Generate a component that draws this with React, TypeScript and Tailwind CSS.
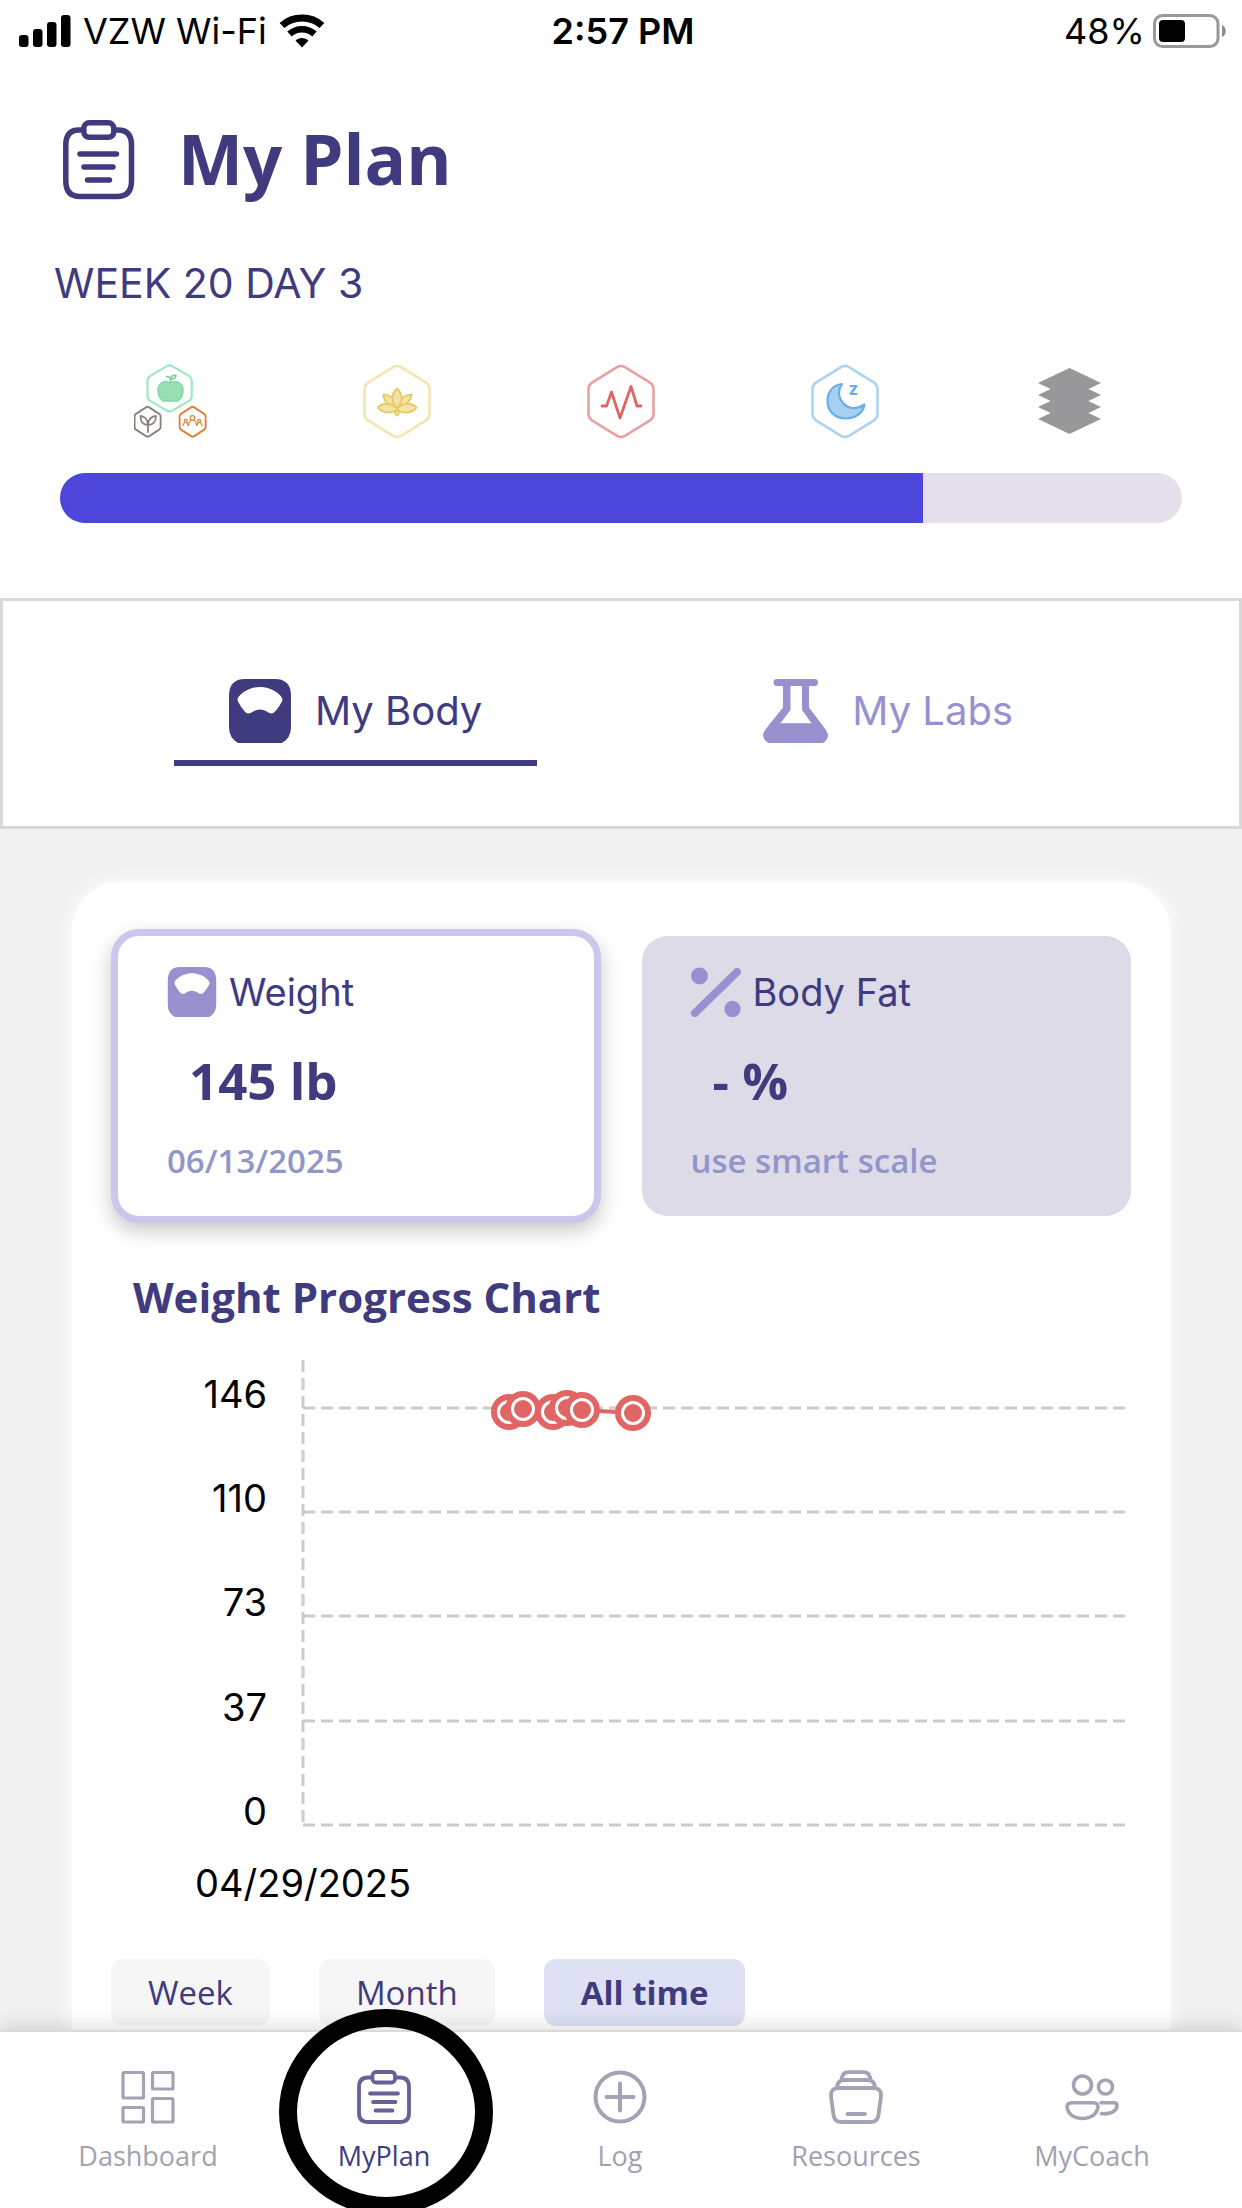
import { useState, type ReactNode } from 'react';
import clsx from 'clsx';

const HEX =
  'M30 3.2Q34 .8 38 3.2L63 18.6Q66.5 21 66.5 25V50Q66.5 54 63 56.4L38 71.8Q34 74.2 30 71.8L5 56.4Q1.5 54 1.5 50V25Q1.5 21 5 18.6Z';

/* ---------- Status bar ---------- */

function StatusBar() {
  return (
    <div className="grid grid-cols-3 items-center h-[60px] pl-[19px] pr-[15px] font-['Inter',sans-serif] text-[36px] leading-[62px] text-black">
      <div className="flex items-center gap-3 whitespace-nowrap">
        <svg width="52" height="34" viewBox="0 0 52 34" aria-hidden="true">
          <rect x="0" y="21" width="9.5" height="12" rx="3" />
          <rect x="14" y="15" width="9.5" height="18" rx="3" />
          <rect x="28" y="8" width="9.5" height="25" rx="3" />
          <rect x="42" y="1" width="9.5" height="32" rx="3" />
        </svg>
        <span>VZW Wi-Fi</span>
        <svg width="46" height="34" viewBox="0 0 46 34" fill="none" stroke="#000" aria-hidden="true">
          <path d="M3 11.5C14 1.5 32 1.5 43 11.5" strokeWidth="7" />
          <path d="M10.500 20C17.500 13.500 28.500 13.500 35.500 20" strokeWidth="6.500" />
          <path d="M23 33.500L16.500 26.500C20 23 26 23 29.500 26.500Z" fill="#000" stroke="none" />
        </svg>
      </div>
      <span className="text-center font-semibold">2:57 PM</span>
      <div className="flex items-center justify-end gap-2">
        <span>48%</span>
        <svg width="74" height="34" viewBox="0 0 74 34" fill="none" aria-hidden="true">
          <rect x="1.500" y="1.500" width="63.500" height="31" rx="8" stroke="#999" strokeWidth="3" />
          <rect x="6" y="6" width="26" height="22" rx="4" fill="#000" />
          <path d="M69 11C74 13 74 21 69 23Z" fill="#8c8c8c" />
        </svg>
      </div>
    </div>
  );
}

/* ---------- Icons ---------- */

function ClipboardIcon() {
  return (
    <svg width="72" height="80" viewBox="0 0 72 80" fill="none" stroke="#403a7f" strokeWidth="5.500" strokeLinecap="round" aria-hidden="true">
      <path d="M19 10H16Q2.800 10 2.800 25V61Q2.800 76.500 17 76.500H54Q68.500 76.500 68.500 61V25Q68.500 10 55 10H52" />
      <rect x="20.800" y="2.800" width="30" height="14.500" rx="5.500" />
      <path d="M17 34H53.500M21 47H50M24.500 60H46.500" />
    </svg>
  );
}

function NutritionIcon() {
  return (
    <svg width="76" height="75" viewBox="0 0 76 75" fill="none" strokeLinecap="round" strokeLinejoin="round" aria-hidden="true">
      <g transform="translate(12.500 0) scale(.68 .65)">
        <path d={HEX} stroke="#a0e6c3" strokeWidth="3.300" />
      </g>
      <path d="M36 19C31 15.500 24 19 24 26C24 31 26.500 35 29 37H44C46.500 35 49 31 49 26C49 19 42 15.500 36 19Z" fill="#97e0b4" stroke="#82d6a4" strokeWidth="1.500" />
      <path d="M36.500 18V14.500M36.500 15C37 11.500 39.500 11 42 11.500C41.500 14.500 39 15.500 36.500 15ZM36.500 14.500C35.500 12.500 34 12.500 32.500 12.500" stroke="#79cf9b" strokeWidth="1.600" />
      <g transform="translate(0 42) scale(.4 .42)">
        <path d={HEX} stroke="#8a8375" strokeWidth="4.600" />
      </g>
      <path d="M14 68V59M14 61C14 55 10 52 6.500 52C6.500 57.500 9 61 14 61ZM14 61C14 55 18 52 22 52C22 57.500 19 61 14 61Z" stroke="#8a8375" strokeWidth="1.800" />
      <g transform="translate(45 42) scale(.4 .42)">
        <path d={HEX} stroke="#dd7f36" strokeWidth="4.600" />
      </g>
      <g stroke="#dd8a4a" strokeWidth="1.300">
        <circle cx="58.500" cy="54" r="2.300" />
        <path d="M54.500 61.500C54.500 58.500 55.500 57 57 56.500M62.500 61.500C62.500 58.500 61.500 57 60 56.500" />
        <circle cx="51.800" cy="57" r="1.500" />
        <circle cx="65.200" cy="57" r="1.500" />
        <path d="M49 61.500C49 60 50 59 51 58.500M53.800 61C53.700 60 53.300 59 52.500 58.500M68 61.500C68 60 67 59 66 58.500M63.200 61C63.300 60 63.700 59 64.500 58.500" />
      </g>
    </svg>
  );
}

function HexIcon({ color, children }: { color: string; children: ReactNode }) {
  return (
    <svg width="68" height="75" viewBox="0 0 68 75" fill="none" strokeLinecap="round" strokeLinejoin="round" aria-hidden="true">
      <path d={HEX} stroke={color} strokeWidth="2.600" />
      {children}
    </svg>
  );
}

function LotusIcon() {
  return (
    <HexIcon color="#f4e6b0">
      <g fill="#f4e3a6" stroke="#e7cb68" strokeWidth="2">
        <path d="M34 44C27 42 20.500 38 20.500 30.500C28 31 33 36 34 44ZM34 44C41 42 48 38 48.500 30.500C41 31 35 36 34 44Z" />
        <path d="M34 44.500C28 38 28 30 34 24.500C40 30 40 38 34 44.500Z" />
        <path d="M34 45C28 38 19 38.500 14.800 43.500C20 50 30 50 34 45ZM34 45C40 38 49 38.500 53.500 43.500C48 50 38 50 34 45Z" />
        <path d="M34 45C31.500 48 31.500 50 34 51.500C36.500 50 36.500 48 34 45Z" />
      </g>
    </HexIcon>
  );
}

function PulseIcon() {
  return (
    <HexIcon color="#eaa0a3">
      <path d="M15 42H19.500L24.500 28L33 54L44 22.500L50 42H54" stroke="#dd6666" strokeWidth="2.800" />
    </HexIcon>
  );
}

function SleepIcon() {
  return (
    <HexIcon color="#acd3f3">
      <path d="M31 20C21 21 16.500 29 16.500 37C16.500 48 25 54.500 35 54.500C44.500 54.500 52 49 53.500 40.500C46 46 37 45 32 39C27 33 27 26 31 20Z" fill="#a6cff2" stroke="#6aaee8" strokeWidth="2.200" />
      <text x="38" y="31" fontSize="18" className="font-['Open_Sans',sans-serif] font-bold" fill="#68aee9">z</text>
    </HexIcon>
  );
}

function StackIcon() {
  return (
    <svg width="63" height="75" viewBox="0 0 63 75" fill="#98989a" aria-hidden="true">
      {[19, 31, 43, 55].map(y => (
        <path key={y} d={`M31.500 ${y - 15}L63 ${y}L31.500 ${y + 15}L0 ${y}Z`} />
      ))}
    </svg>
  );
}

function ScaleIcon({ className }: { className: string }) {
  return (
    <svg viewBox="0 0 62 64" className={className} fill="currentColor" aria-hidden="true">
      <path
        fillRule="evenodd"
        d="M16 0H46Q62 0 62 17V48Q62 59 53 64H9Q0 59 0 48V17Q0 0 16 0ZM19 34.500C16 34.500 8.500 23 8.500 20.500C8.500 17 18 8 31 8S53.500 17 53.500 20.500C53.500 23 46 34.500 43 34.500C39 34.500 37 30.500 31 30.500S23 34.500 19 34.500Z"
      />
    </svg>
  );
}

function FlaskIcon() {
  return (
    <svg width="65" height="64" viewBox="0 0 65 65" preserveAspectRatio="none" fill="currentColor" aria-hidden="true">
      <path
        fillRule="evenodd"
        d="M14 0H51.500Q55 0 55 3.500T51.500 7H46V29L62.500 51Q65 55 65 57Q65 62 60 65H5.500Q0 62 0 57Q0 55 2.500 51L20 29V7H14Q10.500 7 10.500 3.500T14 0ZM27.500 7V31.500L17.500 45H48.500L39 31.500V7Z"
      />
    </svg>
  );
}

function PercentIcon() {
  return (
    <svg width="50" height="50" viewBox="0 0 50 50" fill="#9791d0" aria-hidden="true">
      <circle cx="8.500" cy="9" r="8.500" />
      <circle cx="41.500" cy="42" r="8.200" />
      <path d="M4 46L46 5" stroke="#9791d0" strokeWidth="8" strokeLinecap="round" />
    </svg>
  );
}

/* ---------- Weight chart ---------- */

const gridLines = [
  { label: '146', y: 67 },
  { label: '110', y: 171 },
  { label: '73', y: 275 },
  { label: '37', y: 380 },
  { label: '0', y: 484 },
];

const points = [
  [398, 71],
  [412, 68],
  [442, 71],
  [456, 67],
  [471, 69],
  [522, 72],
];

function WeightChart() {
  return (
    <svg viewBox="0 0 1020 580" className="block w-full h-auto mt-4 font-['Inter',sans-serif]" role="img" aria-label="Weight Progress Chart">
      <g stroke="#cbcbcb" strokeWidth="3" strokeDasharray="12 6">
        <path d="M192 19V482" />
        {gridLines.map(line => (
          <path key={line.label} d={`M192 ${line.y}H1014`} />
        ))}
      </g>
      <g fontSize="38" fill="#000" textAnchor="end">
        {gridLines.map(line => (
          <text key={line.label} x="156" y={line.y}>{line.label}</text>
        ))}
      </g>
      <text x="84" y="556" fontSize="38" fill="#000">04/29/2025</text>
      <polyline points={points.map(p => p.join(',')).join(' ')} fill="none" stroke="#e06666" strokeWidth="4" />
      {points.map(([x, y]) => (
        <g key={x}>
          <circle cx={x} cy={y} r="18" fill="#e06666" />
          <circle cx={x} cy={y} r="10.500" fill="none" stroke="#fff" strokeWidth="3" />
        </g>
      ))}
    </svg>
  );
}

/* ---------- Stat cards ---------- */

type StatProps = {
  icon: ReactNode;
  label: string;
  value: string;
  note: string;
  active?: boolean;
};

function StatCard({ icon, label, value, note, active }: StatProps) {
  return (
    <button
      type="button"
      className={clsx(
        'text-left pl-[49px] pt-[31px] pb-[33px] text-[#403a7f]',
        active
          ? 'rounded-[28px] border-[7px] border-[#cbc7ec] bg-white shadow-[0_8px_20px_rgba(0,0,0,0.22)]'
          : 'rounded-[26px] bg-[#dcdbe7]',
      )}
    >
      <span className="flex items-center gap-3 font-['Inter',sans-serif] text-[38px] leading-[50px]">
        {icon}
        {label}
      </span>
      <span className="block mt-7 pl-[22px] text-[51px] leading-[70px] font-bold">{value}</span>
      <span className="block mt-6 text-[33px] leading-[44px] font-semibold text-[#9097c8]">{note}</span>
    </button>
  );
}

/* ---------- Bottom navigation ---------- */

const navItems = [
  {
    label: 'Dashboard',
    icon: (
      <g strokeWidth="3.200">
        <rect x="2" y="2.500" width="20.500" height="25.500" rx="1" />
        <rect x="31.500" y="2.500" width="20.500" height="16.500" rx="1" />
        <rect x="2" y="37.500" width="20.500" height="14.500" rx="1" />
        <rect x="31.500" y="28.500" width="20.500" height="23.500" rx="1" />
      </g>
    ),
  },
  {
    label: 'MyPlan',
    icon: (
      <g strokeWidth="3.800">
        <path d="M14 7.500H11Q2 7.500 2 17V43Q2 52 11 52H43Q52 52 52 43V17Q52 7.500 43 7.500H39" />
        <rect x="15.500" y="2" width="22.500" height="10.500" rx="3.500" />
        <path d="M13 23.500H41M16 32H38.500M18.500 40.500H35.500" />
      </g>
    ),
  },
  {
    label: 'Log',
    icon: (
      <g strokeWidth="4">
        <circle cx="27" cy="27" r="24.500" />
        <path d="M27 13.500V40.500M13.500 27H40.500" />
      </g>
    ),
  },
  {
    label: 'Resources',
    icon: (
      <g strokeWidth="3.800">
        <path d="M10 18H44Q52.500 18 52 26L49.500 45Q48.500 52 42 52H12Q5.500 52 4.500 45L2 26Q1.500 18 10 18Z" />
        <path d="M8 17Q9 10 15 10H39Q45 10 46 17M12.500 10Q13.500 2.200 19 2.200H35Q40.500 2.200 41.500 10M18.500 44H36" />
      </g>
    ),
  },
  {
    label: 'MyCoach',
    icon: (
      <g strokeWidth="3.600">
        <circle cx="17.500" cy="15" r="9" />
        <circle cx="40.500" cy="17" r="7" />
        <path d="M7 32.800H28Q33 32.800 33 37C32 44 26 48.500 17.500 48.500C9 48.500 3 44 2 37Q2 32.800 7 32.800Z" />
        <path d="M36 32.800H49Q52 32.800 52 36C51.500 41 45 45 36.500 43.500" />
      </g>
    ),
  },
];

function BottomNav() {
  return (
    <nav className="relative shrink-0 grid grid-cols-5 pl-[30px] pr-8 pt-[38px] pb-[34px] bg-white border-t-2 border-[#dadada] shadow-[0_-4px_18px_rgba(0,0,0,0.13)]">
      {navItems.map(item => {
        const isActive = item.label === 'MyPlan';
        return (
          <a
            key={item.label}
            href="#"
            aria-current={isActive ? 'page' : undefined}
            className={clsx('relative flex flex-col items-center gap-[14px]', isActive ? 'text-[#403a7f]' : 'text-[#a1a1b0]')}
          >
            <svg
              width="54"
              height="54"
              viewBox="0 0 54 54"
              fill="none"
              stroke={isActive ? '#67619a' : '#a3a3b3'}
              strokeLinecap="round"
              strokeLinejoin="round"
              aria-hidden="true"
            >
              {item.icon}
            </svg>
            <span className="text-[27px] leading-9">{item.label}</span>
            {isActive && (
              <span className="absolute left-1/2 -top-[61px] -ml-[105px] w-[214px] h-[206px] rounded-[50%] border-[18px] border-black pointer-events-none" />
            )}
          </a>
        );
      })}
    </nav>
  );
}

/* ---------- Page ---------- */

const ranges = ['Week', 'Month', 'All time'];

export default function App() {
  const [tab, setTab] = useState('body');
  const [range, setRange] = useState('All time');
  const progress = (20 / 26) * 100;

  return (
    <div className="flex flex-col h-screen overflow-hidden bg-[#f1f1f1] font-['Open_Sans',sans-serif] text-[#403a7f]">
      <main className="flex-1 min-h-0 overflow-y-auto [scrollbar-width:none]">
        <header className="bg-white pb-[75px]">
          <StatusBar />
          <div className="flex items-center gap-[43px] pt-[58px] pl-[63px]">
            <ClipboardIcon />
            <h1 className="pb-1 text-[69px] leading-[80px] font-bold">My Plan</h1>
          </div>
          <p className="mt-[57px] pl-[54px] font-['Inter',sans-serif] text-[41px] leading-[48px]">WEEK 20 DAY 3</p>

          <div className="mt-[57px] px-[60px]">
            <div className="grid grid-cols-5 justify-items-center">
              <NutritionIcon />
              <LotusIcon />
              <PulseIcon />
              <SleepIcon />
              <StackIcon />
            </div>
            <div className="mt-[34px] h-[50px] rounded-full overflow-hidden bg-[#e5dfeb]">
              <div className="h-full bg-[#4c46db]" style={{ width: `${progress}%` }} />
            </div>
          </div>
        </header>

        <div className="flex justify-evenly border-[3px] border-[#d9d9d9] bg-white pt-[78px] pb-[60px] font-['Inter',sans-serif] text-[40px] leading-[62px]">
          <button
            type="button"
            onClick={() => setTab('body')}
            className={clsx(
              'flex items-center gap-6 px-[55px] pb-[17px] border-b-[6px]',
              tab === 'body' ? 'border-[#403a7f] text-[#403a7f]' : 'border-transparent text-[#9791d0]',
            )}
          >
            <ScaleIcon className="w-[62px] h-16" />
            My Body
          </button>
          <button
            type="button"
            onClick={() => setTab('labs')}
            className={clsx(
              'flex items-center gap-6 px-[55px] pb-[17px] border-b-[6px]',
              tab === 'labs' ? 'border-[#403a7f] text-[#403a7f]' : 'border-transparent text-[#9791d0]',
            )}
          >
            <FlaskIcon />
            My Labs
          </button>
        </div>

        <section className="mx-[72px] mt-[53px] px-[39px] pt-[47px] pb-20 rounded-[48px] bg-white shadow-[0_0_20px_#fff]">
          <div className="grid grid-cols-2 items-center gap-[41px]">
            <StatCard
              active
              icon={<ScaleIcon className="w-[50px] h-[50px] text-[#9791d0]" />}
              label="Weight"
              value="145 lb"
              note="06/13/2025"
            />
            <StatCard icon={<PercentIcon />} label="Body Fat" value="- %" note="use smart scale" />
          </div>

          <h2 className="mt-[46px] pl-[22px] text-[42px] leading-[56px] font-bold">Weight Progress Chart</h2>
          <WeightChart />

          <div className="flex gap-[49px] mt-[38px]">
            {ranges.map(name => (
              <button
                key={name}
                type="button"
                onClick={() => setRange(name)}
                className={clsx(
                  'px-[37px] rounded-xl text-[33px] leading-[67px]',
                  name === range ? 'bg-[#dee0f4] font-bold' : 'bg-[#f6f6f6]',
                )}
              >
                {name}
              </button>
            ))}
          </div>
        </section>
      </main>

      <BottomNav />
    </div>
  );
}
